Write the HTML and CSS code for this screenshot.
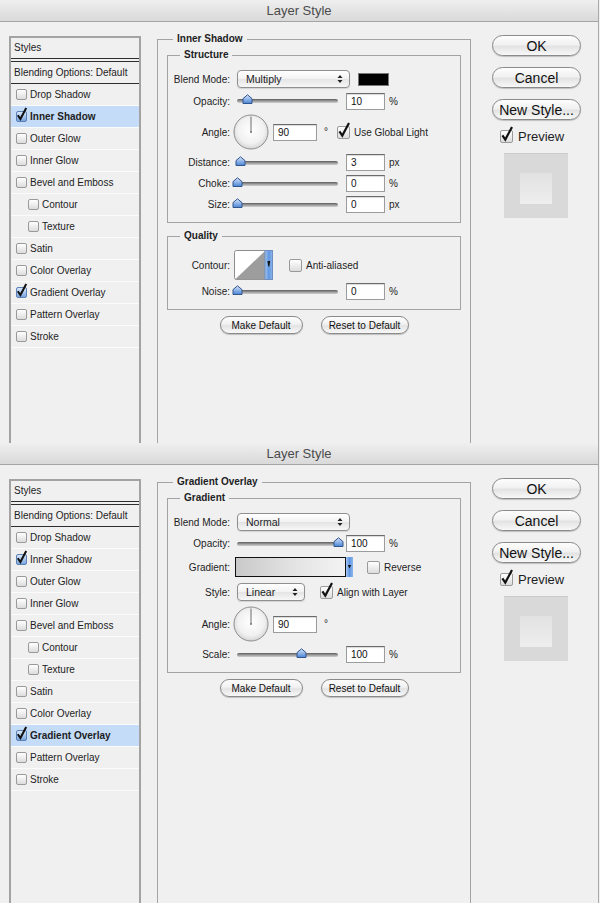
FILE: index.html
```html
<!DOCTYPE html>
<html lang="en">
<head>
    <meta charset="UTF-8">
    <title>Layer Style</title>
    <link rel="stylesheet" href="styles.css">
</head>
<body>
    <!-- Inner Shadow panel -->
    <div class="dialog">
        <div class="titlebar">Layer Style</div>
        <div class="dialog-body">
            <div class="styles-list">
                <div class="list-head">Styles</div>
                <div class="list-blend">Blending Options: Default</div>
                <ul class="effects">
                    <li><span class="cb"></span>Drop Shadow</li>
                    <li class="selected"><span class="cb blue"><svg width="11" height="11" viewBox="0 0 11 11"><path d="M1.8 5.2 L4.4 9 L10.2 -2" fill="none" stroke="#111" stroke-width="2"/></svg></span>Inner Shadow</li>
                    <li><span class="cb"></span>Outer Glow</li>
                    <li><span class="cb"></span>Inner Glow</li>
                    <li><span class="cb"></span>Bevel and Emboss</li>
                    <li class="sub"><span class="cb"></span>Contour</li>
                    <li class="sub"><span class="cb"></span>Texture</li>
                    <li><span class="cb"></span>Satin</li>
                    <li><span class="cb"></span>Color Overlay</li>
                    <li><span class="cb blue"><svg width="11" height="11" viewBox="0 0 11 11"><path d="M1.8 5.2 L4.4 9 L10.2 -2" fill="none" stroke="#111" stroke-width="2"/></svg></span>Gradient Overlay</li>
                    <li><span class="cb"></span>Pattern Overlay</li>
                    <li><span class="cb"></span>Stroke</li>
                </ul>
            </div>

            <fieldset class="group">
                <legend>Inner Shadow</legend>
                <fieldset class="box">
                    <legend>Structure</legend>
                    <div class="row h22">
                        <span class="lbl">Blend Mode:</span>
                        <div class="ctrl">
                            <div class="popup">Multiply<svg width="6" height="10" viewBox="0 0 6 10"><path d="M0.5 4 L3 1 L5.5 4Z M0.5 6 L3 9 L5.5 6Z" fill="#222"/></svg></div>
                            <div class="color-chip"></div>
                        </div>
                    </div>
                    <div class="row h22">
                        <span class="lbl">Opacity:</span>
                        <div class="ctrl">
                            <div class="slider">
                                <svg class="knob" style="left: 10%" width="11" height="10" viewBox="0 0 11 10">
                                    <defs>
                                        <linearGradient id="knobFill" x1="0" y1="0" x2="0" y2="1">
                                            <stop offset="0" stop-color="#d7e6fb"/>
                                            <stop offset="1" stop-color="#4a84d6"/>
                                        </linearGradient>
                                    </defs>
                                    <path d="M1 9.5 V4.6 L5.5 0.8 L10 4.6 V9.5 Z" fill="url(#knobFill)" stroke="#32558c"/>
                                </svg>
                            </div>
                            <input class="num" type="text" value="10">
                            <span class="unit">%</span>
                        </div>
                    </div>
                    <div class="row h40">
                        <span class="lbl">Angle:</span>
                        <div class="ctrl">
                            <svg class="dial" width="36" height="36" viewBox="0 0 36 36">
                                <defs>
                                    <radialGradient id="dialFill" cx="0.5" cy="0.45" r="0.55">
                                        <stop offset="0" stop-color="#ffffff"/>
                                        <stop offset="0.7" stop-color="#f1f1f1"/>
                                        <stop offset="1" stop-color="#d6d6d6"/>
                                    </radialGradient>
                                </defs>
                                <circle cx="18" cy="18" r="17" fill="url(#dialFill)" stroke="#8e8e8e"/>
                                <path d="M18 18 V2.5" stroke="#6c6c6c"/>
                                <circle cx="18" cy="18" r="1" fill="#777"/>
                            </svg>
                            <input class="num wide" type="text" value="90">
                            <span class="deg">°</span>
                            <span class="cb big"><svg width="13" height="13" viewBox="0 0 13 13"><path d="M2.4 6.4 L5.3 10.6 L12 -2" fill="none" stroke="#111" stroke-width="2.2"/></svg></span>
                            <span class="cb-text">Use Global Light</span>
                        </div>
                    </div>
                    <div class="row">
                        <span class="lbl">Distance:</span>
                        <div class="ctrl">
                            <div class="slider">
                                <svg class="knob" style="left: 3%" width="11" height="10" viewBox="0 0 11 10"><path d="M1 9.5 V4.6 L5.5 0.8 L10 4.6 V9.5 Z" fill="url(#knobFill)" stroke="#32558c"/></svg>
                            </div>
                            <input class="num" type="text" value="3">
                            <span class="unit">px</span>
                        </div>
                    </div>
                    <div class="row">
                        <span class="lbl">Choke:</span>
                        <div class="ctrl">
                            <div class="slider">
                                <svg class="knob" style="left: 0%" width="11" height="10" viewBox="0 0 11 10"><path d="M1 9.5 V4.6 L5.5 0.8 L10 4.6 V9.5 Z" fill="url(#knobFill)" stroke="#32558c"/></svg>
                            </div>
                            <input class="num" type="text" value="0">
                            <span class="unit">%</span>
                        </div>
                    </div>
                    <div class="row">
                        <span class="lbl">Size:</span>
                        <div class="ctrl">
                            <div class="slider">
                                <svg class="knob" style="left: 0%" width="11" height="10" viewBox="0 0 11 10"><path d="M1 9.5 V4.6 L5.5 0.8 L10 4.6 V9.5 Z" fill="url(#knobFill)" stroke="#32558c"/></svg>
                            </div>
                            <input class="num" type="text" value="0">
                            <span class="unit">px</span>
                        </div>
                    </div>
                </fieldset>

                <fieldset class="box">
                    <legend>Quality</legend>
                    <div class="row h32">
                        <span class="lbl">Contour:</span>
                        <div class="ctrl">
                            <svg class="contour" width="39" height="30" viewBox="0 0 39 30">
                                <defs>
                                    <linearGradient id="dropBlue" x1="0" y1="0" x2="1" y2="0">
                                        <stop offset="0" stop-color="#a9c8f2"/>
                                        <stop offset="0.5" stop-color="#5f97e2"/>
                                        <stop offset="1" stop-color="#8fb5ea"/>
                                    </linearGradient>
                                </defs>
                                <rect x="0.5" y="0.5" width="38" height="29" rx="2" fill="#fff" stroke="#8c8c8c"/>
                                <path d="M1 29.5 L31 1 V29.5 Z" fill="#9d9d9d"/>
                                <rect x="31" y="0.5" width="7.5" height="29" fill="url(#dropBlue)" stroke="#6f8fc0"/>
                                <path d="M33.4 11 H36.2 L35.3 16.5 H34.3 Z" fill="#111"/>
                            </svg>
                            <span class="cb big gap-left"></span>
                            <span class="cb-text">Anti-aliased</span>
                        </div>
                    </div>
                    <div class="row">
                        <span class="lbl">Noise:</span>
                        <div class="ctrl">
                            <div class="slider">
                                <svg class="knob" style="left: 0%" width="11" height="10" viewBox="0 0 11 10"><path d="M1 9.5 V4.6 L5.5 0.8 L10 4.6 V9.5 Z" fill="url(#knobFill)" stroke="#32558c"/></svg>
                            </div>
                            <input class="num" type="text" value="0">
                            <span class="unit">%</span>
                        </div>
                    </div>
                </fieldset>

                <div class="defaults">
                    <button class="pill make">Make Default</button>
                    <button class="pill reset">Reset to Default</button>
                </div>
            </fieldset>

            <div class="actions">
                <button class="pill">OK</button>
                <button class="pill">Cancel</button>
                <button class="pill">New Style...</button>
                <div class="preview-toggle">
                    <span class="cb big"><svg width="13" height="13" viewBox="0 0 13 13"><path d="M2.4 6.4 L5.3 10.6 L12 -2" fill="none" stroke="#111" stroke-width="2.2"/></svg></span>
                    Preview
                </div>
                <div class="preview-swatch"><div></div></div>
            </div>
        </div>
    </div>

    <!-- Gradient Overlay panel -->
    <div class="dialog tall">
        <div class="titlebar">Layer Style</div>
        <div class="dialog-body">
            <div class="styles-list">
                <div class="list-head">Styles</div>
                <div class="list-blend">Blending Options: Default</div>
                <ul class="effects">
                    <li><span class="cb"></span>Drop Shadow</li>
                    <li><span class="cb blue"><svg width="11" height="11" viewBox="0 0 11 11"><path d="M1.8 5.2 L4.4 9 L10.2 -2" fill="none" stroke="#111" stroke-width="2"/></svg></span>Inner Shadow</li>
                    <li><span class="cb"></span>Outer Glow</li>
                    <li><span class="cb"></span>Inner Glow</li>
                    <li><span class="cb"></span>Bevel and Emboss</li>
                    <li class="sub"><span class="cb"></span>Contour</li>
                    <li class="sub"><span class="cb"></span>Texture</li>
                    <li><span class="cb"></span>Satin</li>
                    <li><span class="cb"></span>Color Overlay</li>
                    <li class="selected"><span class="cb blue"><svg width="11" height="11" viewBox="0 0 11 11"><path d="M1.8 5.2 L4.4 9 L10.2 -2" fill="none" stroke="#111" stroke-width="2"/></svg></span>Gradient Overlay</li>
                    <li><span class="cb"></span>Pattern Overlay</li>
                    <li><span class="cb"></span>Stroke</li>
                </ul>
            </div>

            <fieldset class="group">
                <legend>Gradient Overlay</legend>
                <fieldset class="box">
                    <legend>Gradient</legend>
                    <div class="row h22">
                        <span class="lbl">Blend Mode:</span>
                        <div class="ctrl">
                            <div class="popup">Normal<svg width="6" height="10" viewBox="0 0 6 10"><path d="M0.5 4 L3 1 L5.5 4Z M0.5 6 L3 9 L5.5 6Z" fill="#222"/></svg></div>
                        </div>
                    </div>
                    <div class="row">
                        <span class="lbl">Opacity:</span>
                        <div class="ctrl">
                            <div class="slider">
                                <svg class="knob" style="left: 100%" width="11" height="10" viewBox="0 0 11 10"><path d="M1 9.5 V4.6 L5.5 0.8 L10 4.6 V9.5 Z" fill="url(#knobFill)" stroke="#32558c"/></svg>
                            </div>
                            <input class="num" type="text" value="100">
                            <span class="unit">%</span>
                        </div>
                    </div>
                    <div class="row h26">
                        <span class="lbl">Gradient:</span>
                        <div class="ctrl">
                            <div class="grad-pick">
                                <div class="grad-bar"></div>
                                <svg width="7" height="20" viewBox="0 0 7 20"><rect x="0" y="0" width="7" height="20" fill="url(#dropBlue)"/><path d="M1.8 8 H5.2 L3.5 11.5 Z" fill="#111"/></svg>
                            </div>
                            <span class="cb big reverse"></span>
                            <span class="cb-text">Reverse</span>
                        </div>
                    </div>
                    <div class="row h24">
                        <span class="lbl">Style:</span>
                        <div class="ctrl">
                            <div class="popup short">Linear<svg width="6" height="10" viewBox="0 0 6 10"><path d="M0.5 4 L3 1 L5.5 4Z M0.5 6 L3 9 L5.5 6Z" fill="#222"/></svg></div>
                            <span class="cb big align"><svg width="13" height="13" viewBox="0 0 13 13"><path d="M2.4 6.4 L5.3 10.6 L12 -2" fill="none" stroke="#111" stroke-width="2.2"/></svg></span>
                            <span class="cb-text">Align with Layer</span>
                        </div>
                    </div>
                    <div class="row h40">
                        <span class="lbl">Angle:</span>
                        <div class="ctrl">
                            <svg class="dial" width="36" height="36" viewBox="0 0 36 36">
                                <circle cx="18" cy="18" r="17" fill="url(#dialFill)" stroke="#8e8e8e"/>
                                <path d="M18 18 V2.5" stroke="#6c6c6c"/>
                                <circle cx="18" cy="18" r="1" fill="#777"/>
                            </svg>
                            <input class="num wide" type="text" value="90">
                            <span class="deg">°</span>
                        </div>
                    </div>
                    <div class="row">
                        <span class="lbl">Scale:</span>
                        <div class="ctrl">
                            <div class="slider">
                                <svg class="knob" style="left: 63%" width="11" height="10" viewBox="0 0 11 10"><path d="M1 9.5 V4.6 L5.5 0.8 L10 4.6 V9.5 Z" fill="url(#knobFill)" stroke="#32558c"/></svg>
                            </div>
                            <input class="num" type="text" value="100">
                            <span class="unit">%</span>
                        </div>
                    </div>
                </fieldset>

                <div class="defaults">
                    <button class="pill make">Make Default</button>
                    <button class="pill reset">Reset to Default</button>
                </div>
            </fieldset>

            <div class="actions">
                <button class="pill">OK</button>
                <button class="pill">Cancel</button>
                <button class="pill">New Style...</button>
                <div class="preview-toggle">
                    <span class="cb big"><svg width="13" height="13" viewBox="0 0 13 13"><path d="M2.4 6.4 L5.3 10.6 L12 -2" fill="none" stroke="#111" stroke-width="2.2"/></svg></span>
                    Preview
                </div>
                <div class="preview-swatch"><div></div></div>
            </div>
        </div>
    </div>
</body>
</html>
```

FILE: styles.css
```css
html, body {
    margin: 0;
}
body {
    background: #f0f0f0;
    font-family: "Liberation Sans", Arial, sans-serif;
    font-size: 10px;
    color: #1d1d24;
}

/* window */
.dialog {
    height: 443px;
    overflow: hidden;
    background: #f0f0f0;
    margin-right: 1px;
    border-right: 1px solid #a9a9a9;
}
.dialog.tall {
    height: 460px;
}
.titlebar {
    height: 21px;
    line-height: 21px;
    text-align: center;
    font-size: 13px;
    color: #4b4b4b;
    background: linear-gradient(#efefef, #d9d9d9);
    border-bottom: 1px solid #a5a5a5;
    border-top-right-radius: 5px;
}
.dialog-body {
    display: flex;
    align-items: flex-start;
    padding: 11px 0 0 9px;
}

/* styles list on the left */
.styles-list {
    flex-shrink: 0;
    width: 132px;
    height: 440px;
    margin-top: 3px;
    box-sizing: border-box;
    border: 2px solid #a3a3a3;
    border-bottom: none;
}
.list-head {
    height: 20px;
    line-height: 20px;
    padding-left: 3px;
    border-bottom: 4px double #2e2e2e;
}
.list-blend {
    height: 21px;
    line-height: 21px;
    padding-left: 3px;
    border-bottom: 1px solid #2e2e2e;
}
.effects {
    list-style: none;
    margin: 0;
    padding: 0;
}
.effects li {
    display: flex;
    align-items: center;
    gap: 3px;
    height: 21px;
    padding-left: 5px;
    border-bottom: 1px solid #fbfbfb;
}
.effects li.sub {
    padding-left: 17px;
}
.effects li.selected {
    background: #c4dcf8;
    font-weight: bold;
}

/* checkboxes */
.cb {
    position: relative;
    flex-shrink: 0;
    width: 11px;
    height: 11px;
    box-sizing: border-box;
    border: 1px solid #9a9a9a;
    border-radius: 2px;
    background: linear-gradient(#ffffff, #dcdcdc);
}
.cb.blue {
    border-color: #5d80b4;
    background: linear-gradient(#d9e8fb, #79a5df);
}
.cb.big {
    width: 13px;
    height: 13px;
}
.cb svg {
    position: absolute;
    left: -1px;
    top: -2px;
    overflow: visible;
}
.cb-text {
    margin-left: 4px;
}

/* main settings area */
.group {
    flex-shrink: 0;
    width: 314px;
    height: 440px;
    box-sizing: border-box;
    margin: 0 0 0 16px;
    padding: 4px 9px 0;
    border: 1px solid #a3a3a3;
    border-bottom: none;
    min-width: 0;
}
legend {
    font-weight: bold;
    line-height: 12px;
    padding: 0 4px;
}
.group > legend {
    margin-left: 6px;
}
.box {
    margin: 0;
    padding: 7px 0;
    border: 1px solid #a3a3a3;
    min-width: 0;
}
.box > legend {
    margin-left: 12px;
}
.box + .box {
    margin-top: 7px;
}

.row {
    display: grid;
    grid-template-columns: 62px auto;
    column-gap: 7px;
    align-items: center;
    height: 21px;
}
.row.h22 { height: 22px; }
.row.h24 { height: 24px; }
.row.h26 { height: 26px; }
.row.h32 { height: 32px; }
.row.h40 { height: 40px; }
.lbl {
    text-align: right;
}
.ctrl {
    display: flex;
    align-items: center;
}

/* popup menus */
.popup {
    display: flex;
    align-items: center;
    justify-content: space-between;
    box-sizing: border-box;
    width: 113px;
    height: 18px;
    padding: 0 6px 0 8px;
    border: 1px solid #8f8f8f;
    border-radius: 4px;
    background: linear-gradient(#ffffff, #f2f2f2 50%, #e4e4e4 51%, #f7f7f7);
    box-shadow: 0 1px 1px rgba(0, 0, 0, 0.12);
    font-size: 10.5px;
}
.popup.short {
    width: 68px;
}
.color-chip {
    width: 31px;
    height: 13px;
    margin-left: 8px;
    box-sizing: border-box;
    background: #000;
    border: 1px solid #777;
}

/* sliders */
.slider {
    position: relative;
    width: 101px;
    height: 4px;
    margin-right: 8px;
    border-radius: 2px;
    background: linear-gradient(#5c5c5c, #a6a6a6 60%, #cfcfcf);
}
.knob {
    position: absolute;
    top: -5px;
    margin-left: -5px;
}

/* number fields */
.num {
    box-sizing: border-box;
    width: 39px;
    height: 17px;
    margin: 0;
    padding: 0 0 0 4px;
    border: 1px solid #9c9c9c;
    border-top-color: #6b6b6b;
    background: #fff;
    box-shadow: inset 0 1px 1px rgba(0, 0, 0, 0.15);
    font: 10px "Liberation Sans", Arial, sans-serif;
    color: #111;
}
.num.wide {
    width: 44px;
}
.unit {
    margin-left: 4px;
}
.deg {
    align-self: flex-start;
    margin: 12px 9px 0 7px;
}

.dial {
    margin: 0 4px 0 -4px;
}
.contour {
    margin-left: -3px;
}
.gap-left {
    margin-left: 16px;
}

/* gradient picker */
.grad-pick {
    display: flex;
    height: 20px;
    margin-left: -2px;
}
.grad-bar {
    width: 111px;
    box-sizing: border-box;
    border: 1px solid #111;
    background: linear-gradient(to right, #c9c9c9, #e2e2e2 50%, #f3f3f3);
}
.reverse {
    margin-left: 14px;
}
.align {
    margin-left: 15px;
}

/* buttons */
.pill {
    box-sizing: border-box;
    padding: 0;
    border: 1px solid #8a8a8a;
    border-radius: 10px;
    background: linear-gradient(#fdfdfd, #f1f1f1 45%, #e3e3e3 55%, #f8f8f8);
    box-shadow: 0 1px 1px rgba(0, 0, 0, 0.2);
    font-family: inherit;
    color: #111;
}
.defaults {
    display: flex;
    justify-content: center;
    gap: 18px;
    margin-top: 6px;
}
.defaults .pill {
    height: 18px;
    font-size: 10px;
}
.make { width: 83px; }
.reset { width: 88px; }

.actions {
    display: flex;
    flex-direction: column;
    flex-shrink: 0;
    width: 89px;
    margin: 2px 0 0 21px;
}
.actions .pill {
    height: 21px;
    margin-bottom: 11px;
    border-radius: 11px;
    font-size: 14px;
}
.preview-toggle {
    display: flex;
    align-items: center;
    gap: 5px;
    height: 13px;
    margin: -1px 0 0 8px;
    font-size: 13px;
}
.preview-swatch {
    display: flex;
    justify-content: center;
    width: 64px;
    height: 65px;
    margin: 10px 0 0 12px;
    padding-top: 19px;
    box-sizing: border-box;
    background: #d9d9d9;
    border-top: 1px solid #cbcbcb;
}
.preview-swatch div {
    width: 32px;
    height: 31px;
    background: linear-gradient(#e2e2e2, #eeeeee);
}
```
